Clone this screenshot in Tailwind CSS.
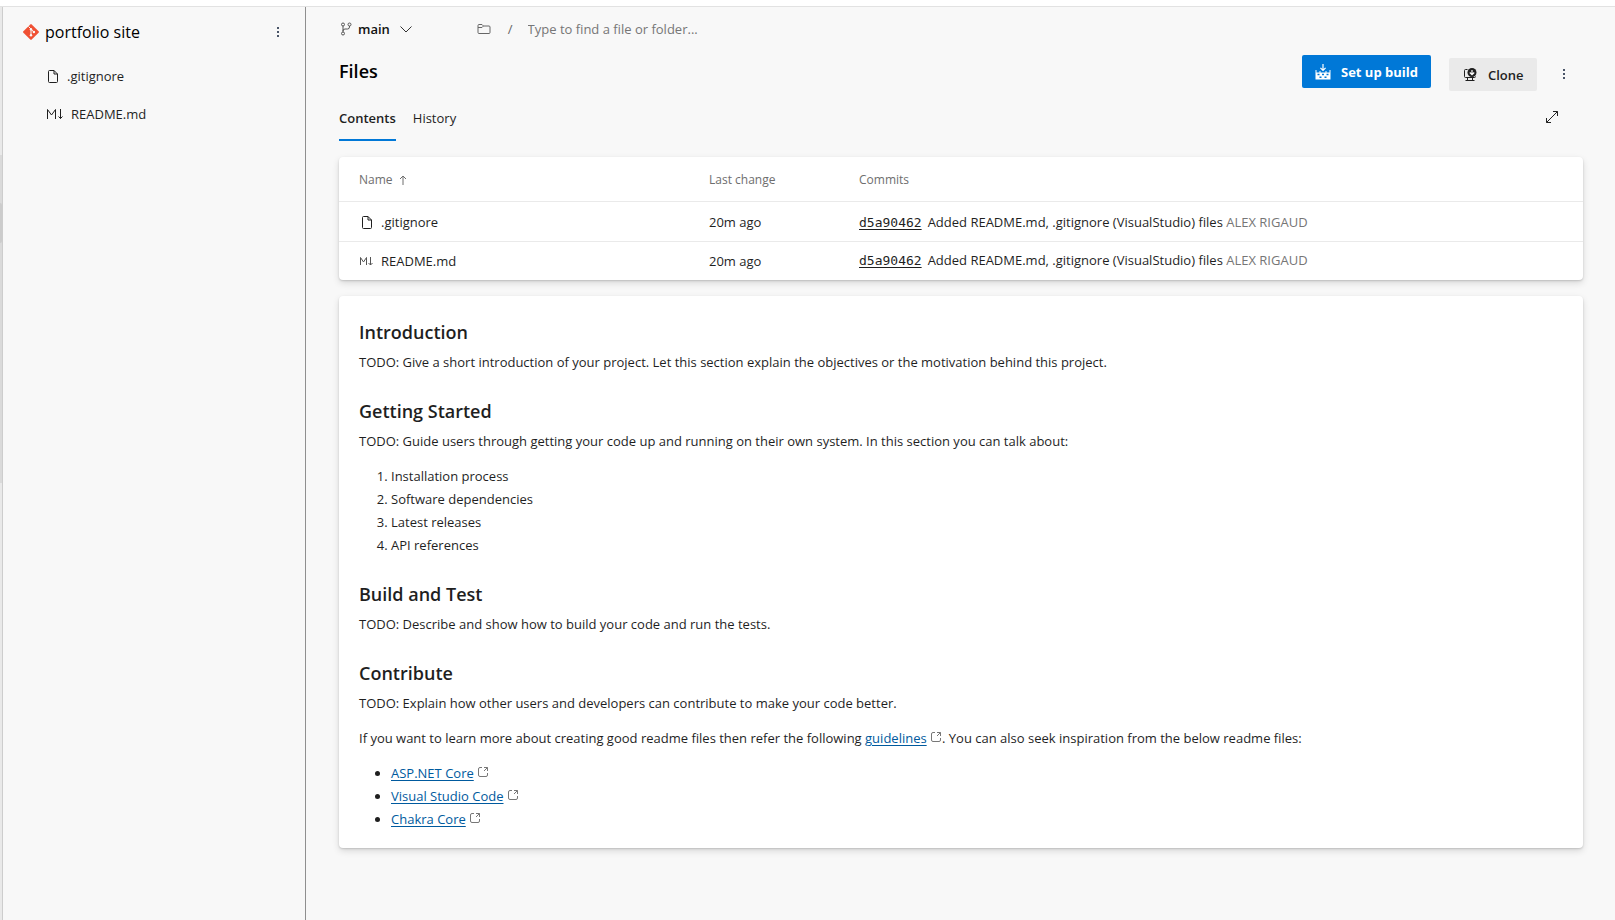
<!DOCTYPE html>
<html lang="en">
<head>
<meta charset="utf-8">
<meta name="viewport" content="width=device-width, initial-scale=1">
<title>Files - portfolio site</title>
<script src="https://cdn.jsdelivr.net/npm/@tailwindcss/browser@4"></script>
</head>
<body class="flex min-h-screen flex-col bg-[#f8f8f8] font-['Open_Sans',sans-serif] text-[13px] leading-5 text-[#1f1f1f]">
<svg class="hidden" aria-hidden="true">
  <symbol id="file" viewBox="0 0 12 15"><path d="M1.500 2.500a1 1 0 0 1 1-1H7L10.500 5v7.500a1 1 0 0 1-1 1h-7a1 1 0 0 1-1-1zM7 1.500V5h3.500" fill="none" stroke="currentColor"/></symbol>
  <symbol id="markdown" viewBox="0 0 17 14"><path d="M1.500 12V2.500L5.500 8l4-5.500V12M14.500 2v9.500M12.500 9.500l2 2 2-2" fill="none" stroke="currentColor"/></symbol>
  <symbol id="external" viewBox="0 0 12 12"><path d="M5 1.500H3a1.500 1.500 0 0 0-1.500 1.500v6A1.500 1.500 0 0 0 3 10.500h6A1.500 1.500 0 0 0 10.500 9V7M7 1.500h3.500V5M10.500 1.500L7 5" fill="none" stroke="currentColor"/></symbol>
  <symbol id="more" viewBox="0 0 4 12"><path d="M1 1h2v2H1zM1 5h2v2H1zM1 9h2v2H1z" fill="currentColor"/></symbol>
</svg>
<header class="h-[7px] border-b border-[#e2e2e2] bg-white"></header>
<div class="flex flex-1">
  <div class="flex w-[3px] flex-col border-r border-[#cdcdcd] bg-[#e9e9e9]">
    <div class="mt-[148px] h-[328px] bg-[#dadada] pt-12"><div class="h-10 rounded-r-sm bg-[#cccccc]"></div></div>
  </div>
  <aside class="w-[303px] shrink-0 border-r border-[#8f8f8f] pt-[11px]">
    <div class="flex h-7 items-center pr-[19px] pl-5">
      <svg class="size-4" viewBox="0 0 16 16"><path d="M7.300.400a1 1 0 0 1 1.400 0l6.900 6.900a1 1 0 0 1 0 1.400l-6.900 6.900a1 1 0 0 1-1.400 0L.400 8.700a1 1 0 0 1 0-1.400z" fill="#f05033"/><path d="M5.500 2.500l2.500 2.500v6.500M8 5.200l2.800 2.800" stroke="#f8f8f8" stroke-width="1" fill="none"/><circle cx="8" cy="5.200" r="1.200" fill="#f8f8f8"/><circle cx="8" cy="11.300" r="1.200" fill="#f8f8f8"/><circle cx="10.900" cy="8" r="1.200" fill="#f8f8f8"/></svg>
      <h2 class="ml-1.5 flex-1 text-[16px] leading-7 text-black">portfolio site</h2>
      <button type="button" aria-label="Repository options" class="grid h-6 w-4 place-items-center text-[#4a5568]"><svg class="h-3 w-1"><use href="#more"/></svg></button>
    </div>
    <nav class="mt-[11px] flex flex-col pl-[43px] leading-[38px]">
      <a href="#" class="flex items-center gap-2"><svg class="ml-px h-[15px] w-3"><use href="#file"/></svg>.gitignore</a>
      <a href="#" class="flex items-center gap-2"><svg class="h-3.5 w-[17px]"><use href="#markdown"/></svg>README.md</a>
    </nav>
  </aside>
  <main class="min-w-0 flex-1 pt-2 pr-8 pl-[33px]">
    <div class="flex h-7 items-center">
      <button type="button" class="flex items-center font-semibold text-[#111]">
        <svg class="mr-[5px] size-3.5 text-[#555]" viewBox="0 0 14 14" fill="none" stroke="currentColor"><circle cx="4" cy="2.500" r="1.500"/><circle cx="10.500" cy="2.500" r="1.500"/><circle cx="4" cy="11.500" r="1.500"/><path d="M4 4v6M10.500 4v1a2 2 0 0 1-2 2H6a2 2 0 0 0-2 2"/></svg>
        main
        <svg class="ml-2.5 h-3 w-3" viewBox="0 0 12 12" fill="none" stroke="#333"><path d="M.500 3.500L6 9l5.500-5.500"/></svg>
      </button>
      <svg class="ml-[65px] h-3 w-3.5 text-[#666]" viewBox="0 0 14 12" fill="none" stroke="currentColor"><path d="M1 2.500a1 1 0 0 1 1-1h3l1.500 1.500H12a1 1 0 0 1 1 1v5.500a1 1 0 0 1-1 1H2a1 1 0 0 1-1-1zM1 4.500h4L6.500 3"/></svg>
      <span class="mr-[15px] ml-[17px] text-[#666]">/</span>
      <input type="text" aria-label="Find a file or folder" placeholder="Type to find a file or folder..." class="h-7 min-w-0 flex-1 bg-transparent outline-none placeholder:text-[#767676]">
    </div>
    <div class="flex items-start pt-3">
      <h1 class="flex-1 pt-0.5 text-[18px] leading-7 font-semibold text-black">Files</h1>
      <button type="button" class="flex h-[33px] w-[129px] items-center gap-2.5 rounded-xs bg-[#0078d7] pl-[13px] font-bold text-white">
        <svg class="size-4 shrink-0" viewBox="0 0 16 16" fill="currentColor"><path d="M7.400 0h1.200v5l1.600-1.600.800.800L8 7.200l-3-3 .800-.800L7.400 5zM.500 6h1v2.500h3V7h1v1.500h5V7h1v1.500h3V6h1v9.500H.500zm2 3.800v1.400h2V9.800zm4.500 0v1.400h2V9.800zm4.500 0v1.400h2V9.800zM4.500 12.500v1.400h2v-1.400zm5 0v1.400h2v-1.400z" fill-rule="evenodd"/></svg>
        Set up build
      </button>
      <button type="button" class="mt-[3px] ml-[18px] flex h-[33px] w-[88px] items-center gap-[11px] rounded-xs bg-[#eaeaea] pl-3.5 font-semibold">
        <svg class="size-3.5 shrink-0" viewBox="0 0 14 14"><path d="M4.500 1.500H2.500a1 1 0 0 0-1 1v6a1 1 0 0 0 1 1h9a1 1 0 0 0 1-1M4.500 9.500v2.500M9.500 9.500v2.500M2.500 12.500h9" fill="none" stroke="#1f1f1f"/><circle cx="9" cy="4.500" r="4.500" fill="#1f1f1f"/><path d="M9 2v4.500M6.800 4.500L9 6.700 11.200 4.500" fill="none" stroke="#fff" stroke-width="1.200"/></svg>
        Clone
      </button>
      <button type="button" aria-label="More actions" class="mt-[7px] mr-[11px] ml-[19px] grid h-6 w-4 place-items-center text-[#4a5568]"><svg class="h-3 w-1"><use href="#more"/></svg></button>
    </div>
    <div class="mt-3 flex h-[38px] items-start justify-between">
      <nav class="flex gap-[17px] leading-[30px]">
        <a href="#" aria-current="page" class="h-[38px] border-b-2 border-[#0078d7] font-semibold">Contents</a>
        <a href="#">History</a>
      </nav>
      <button type="button" aria-label="Full screen" class="mt-[7px] mr-6"><svg class="size-3.5" viewBox="0 0 14 14" fill="none" stroke="#222"><path d="M1.500 12.500l11-11M8 1.500h4.500V6M1.500 8v4.500H6"/></svg></button>
    </div>
    <section class="mt-4 rounded-sm bg-white shadow-[0_3px_7px_rgba(0,0,0,0.13),0_1px_2px_rgba(0,0,0,0.15)]">
      <table class="w-full table-fixed text-left">
        <thead>
          <tr class="h-11 border-b border-[#eaeaea] text-[12px] text-[#6e6e6e]">
            <th class="w-[370px] pt-0.5 pl-5 font-normal"><span class="flex items-center gap-1.5">Name <svg class="h-2.5 w-2" viewBox="0 0 8 10" fill="none" stroke="currentColor"><path d="M4 10V1M1 4l3-3 3 3"/></svg></span></th>
            <th class="w-[150px] pt-0.5 font-normal">Last change</th>
            <th class="pt-0.5 font-normal">Commits</th>
          </tr>
        </thead>
        <tbody>
          <tr class="h-10 border-b border-[#eaeaea]">
            <td class="pt-0.5 pl-5"><a href="#" class="flex items-center"><svg class="mr-2 ml-0.5 h-[15px] w-3"><use href="#file"/></svg>.gitignore</a></td>
            <td class="pt-0.5">20m ago</td>
            <td class="pt-0.5"><a href="#" class="mr-1.5 font-['DejaVu_Sans_Mono',monospace] underline underline-offset-2">d5a90462</a>Added README.md, .gitignore (VisualStudio) files <span class="text-[#767676]">ALEX RIGAUD</span></td>
          </tr>
          <tr class="h-[39px]">
            <td class="pl-5"><a href="#" class="flex items-center gap-2"><svg class="h-3 w-3.5 text-[#555]" viewBox="0 0 14 12" fill="none" stroke="currentColor"><path d="M1.500 10V2.500L4.500 7l3-4.500V10M11.500 2v8M9.500 8l2 2 2-2"/></svg>README.md</a></td>
            <td>20m ago</td>
            <td><a href="#" class="mr-1.5 font-['DejaVu_Sans_Mono',monospace] underline underline-offset-2">d5a90462</a>Added README.md, .gitignore (VisualStudio) files <span class="text-[#767676]">ALEX RIGAUD</span></td>
          </tr>
        </tbody>
      </table>
    </section>
    <article class="mt-4 mb-10 rounded-sm bg-white px-5 pt-[22px] pb-[17px] leading-[23px] shadow-[0_3px_7px_rgba(0,0,0,0.13),0_1px_2px_rgba(0,0,0,0.15)]">
      <h2 class="text-[18px] leading-7 font-semibold">Introduction</h2>
      <p class="mt-[5px]">TODO: Give a short introduction of your project. Let this section explain the objectives or the motivation behind this project.</p>
      <h2 class="mt-[23px] text-[18px] leading-7 font-semibold">Getting Started</h2>
      <p class="mt-[5px]">TODO: Guide users through getting your code up and running on their own system. In this section you can talk about:</p>
      <ol class="mt-3 list-decimal pl-8">
        <li>Installation process</li>
        <li>Software dependencies</li>
        <li>Latest releases</li>
        <li>API references</li>
      </ol>
      <h2 class="mt-[23px] text-[18px] leading-7 font-semibold">Build and Test</h2>
      <p class="mt-[5px]">TODO: Describe and show how to build your code and run the tests.</p>
      <h2 class="mt-[23px] text-[18px] leading-7 font-semibold">Contribute</h2>
      <p class="mt-[5px]">TODO: Explain how other users and developers can contribute to make your code better.</p>
      <p class="mt-3">If you want to learn more about creating good readme files then refer the following <a href="#" class="text-[#005a9e] underline underline-offset-2">guidelines</a> <svg class="inline size-3 align-baseline text-[#777]"><use href="#external"/></svg>. You can also seek inspiration from the below readme files:</p>
      <ul class="mt-3 list-disc pl-8">
        <li><a href="#" class="text-[#005a9e] underline underline-offset-2">ASP.NET Core</a> <svg class="inline size-3 align-baseline text-[#777]"><use href="#external"/></svg></li>
        <li><a href="#" class="text-[#005a9e] underline underline-offset-2">Visual Studio Code</a> <svg class="inline size-3 align-baseline text-[#777]"><use href="#external"/></svg></li>
        <li><a href="#" class="text-[#005a9e] underline underline-offset-2">Chakra Core</a> <svg class="inline size-3 align-baseline text-[#777]"><use href="#external"/></svg></li>
      </ul>
    </article>
  </main>
</div>
</body>
</html>
